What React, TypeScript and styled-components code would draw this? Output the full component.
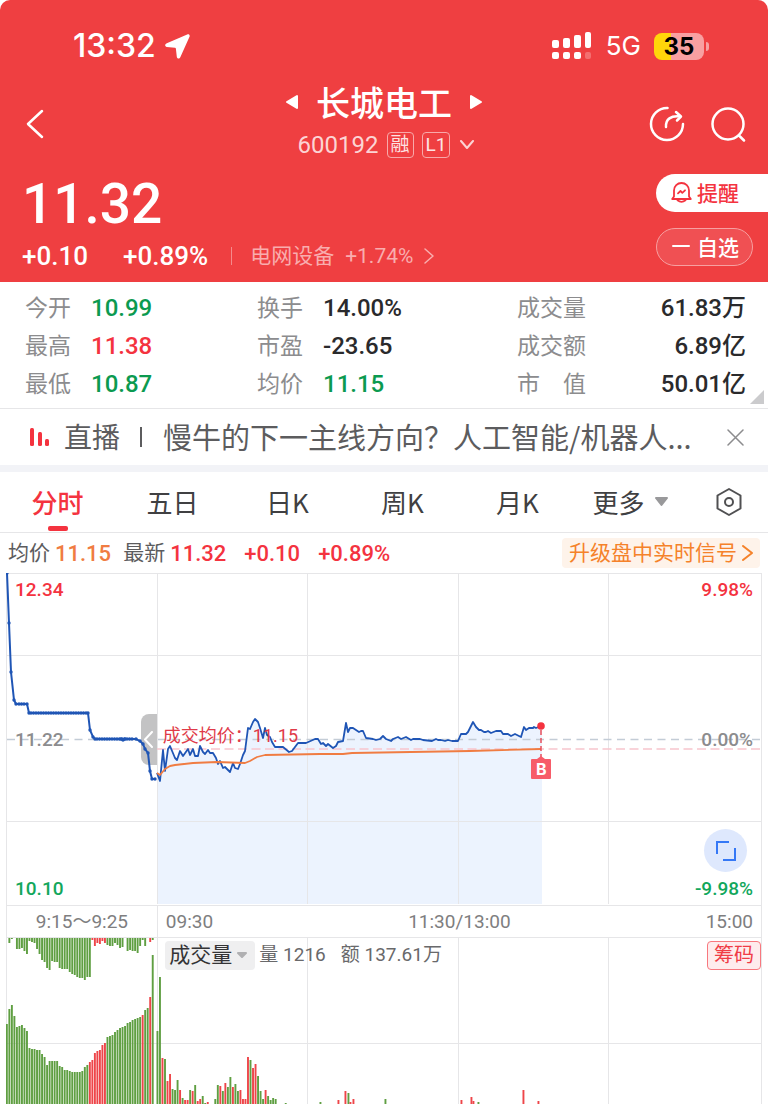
import React from "react";
import styled, { createGlobalStyle, css } from "styled-components";

const cjk = `"Noto Sans CJK SC", sans-serif`;
const numeric = `Roboto, ${cjk}`;

const color = {
  brand: "#ef3f41",
  up: "#f4333f",
  down: "#0b9a50",
  ink: "#2a2a2c",
  muted: "#8c8c8e",
  grid: "#e6e6e8",
  line: "#1f55b5",
  average: "#f07c42",
};

const GlobalStyle = createGlobalStyle`
  *, *::before, *::after { box-sizing: border-box; }
  body { margin: 0; background: #fff; font-family: ${cjk}; color: ${color.ink}; }
  button { border: 0; padding: 0; margin: 0; background: none; font: inherit; color: inherit; cursor: pointer; }
  a { color: inherit; text-decoration: none; }
  dl, dt, dd, h1, p { margin: 0; font-weight: inherit; }
  svg { display: block; flex: none; }
`;

const Page = styled.main`
  width: 100%;
  overflow: hidden;
`;

/* ---------- header ---------- */

const Header = styled.header`
  background: ${color.brand};
  color: #fff;
  border-radius: 10px 10px 0 0;
  padding-bottom: 10px;
`;

const StatusBar = styled.div`
  display: flex;
  align-items: center;
  justify-content: space-between;
  height: 80px;
  padding: 12px 59px 0 73px;
`;

const Clock = styled.div`
  display: flex;
  align-items: center;
  gap: 9px;
  font: 500 32px/32px Inter, sans-serif;
`;

const StatusIcons = styled.div`
  display: flex;
  align-items: center;
  font: 400 26px/32px Inter, sans-serif;
`;

const Network = styled.span`
  margin: 0 13px 0 14px;
`;

const Battery = styled.div`
  width: 50px;
  height: 27px;
  border-radius: 8px;
  background: linear-gradient(90deg, #ffd60a 35%, #f8a0a1 35%);
  color: #000;
  font: 700 24px/27px Inter, sans-serif;
  text-align: center;
`;

const BatteryCap = styled.div`
  width: 3px;
  height: 9px;
  margin-left: 2px;
  border-radius: 0 4px 4px 0;
  background: #f8a0a1;
`;

const Nav = styled.nav`
  display: grid;
  grid-template-columns: 1fr auto 1fr;
  align-items: center;
  height: 88px;
  padding: 0 21px;
`;

const BackButton = styled.button`
  justify-self: start;
  padding-left: 5px;
`;

const NavActions = styled.div`
  display: flex;
  justify-content: flex-end;
  gap: 26px;
`;

const StockTitle = styled.div`
  display: flex;
  flex-direction: column;
  align-items: center;
  gap: 6px;
  padding-bottom: 4px;
`;

const TitleLine = styled.div`
  display: flex;
  align-items: center;
  gap: 18px;
  h1 { font-size: 34px; line-height: 40px; font-weight: 500; }
`;

const CodeLine = styled.div`
  display: flex;
  align-items: center;
  gap: 8px;
  padding-left: 6px;
  font: 400 24px/34px ${numeric};
  color: #fcd4d4;
`;

const Tag = styled.span`
  height: 26px;
  min-width: 26px;
  padding: 0 3px;
  border: 1px solid #f8a9aa;
  border-radius: 4px;
  font: 400 19px/24px ${numeric};
  text-align: center;
  color: #fde3e3;
`;

const PriceBlock = styled.section`
  display: flex;
  justify-content: space-between;
`;

const PriceColumn = styled.div`
  padding: 6px 0 0 22px;
`;

const Price = styled.p`
  font: 500 55px/60px ${numeric};
`;

const ChangeLine = styled.div`
  display: flex;
  align-items: center;
  margin-top: 6px;
  font: 500 26px/32px ${numeric};
  span + span { margin-left: 35px; }
`;

const SectorLink = styled.a`
  display: flex;
  align-items: center;
  gap: 11px;
  margin-left: 23px;
  padding-left: 18px;
  font: 400 21px/18px ${numeric};
  color: #f9adae;
  border-left: 1px solid #f58a8b;
  b { font-weight: 400; }
`;

const Actions = styled.div`
  display: flex;
  flex-direction: column;
  gap: 16px;
  width: 112px;
  padding-top: 6px;
`;

const Pill = styled.button<{ $outlined?: boolean }>`
  display: flex;
  align-items: center;
  gap: 5px;
  height: 38px;
  padding: 0 0 2px 15px;
  font-size: 21px;
  font-weight: 500;
  line-height: 34px;
  background: #fff;
  color: ${color.up};
  border-radius: 19px 0 0 19px;
  ${(p) =>
    p.$outlined &&
    css`
      gap: 7px;
      margin-right: 15px;
      border: 1px solid #f7a0a1;
      border-radius: 19px;
      background: #f05053;
      color: #fff;
    `}
`;

/* ---------- quote figures ---------- */

const Figures = styled.dl`
  position: relative;
  display: grid;
  grid-template-columns: 232fr 260fr 229fr;
  padding: 6px 22px 6px 25px;
  border-bottom: 1px solid ${color.grid};
`;

const Figure = styled.div<{ $spread?: boolean }>`
  display: flex;
  align-items: center;
  gap: 20px;
  height: 38px;
  justify-content: ${(p) => (p.$spread ? "space-between" : "flex-start")};
  dt { padding-bottom: 2px; font-size: 23px; line-height: 36px; color: ${color.muted}; white-space: pre; }
`;

const FigureValue = styled.dd<{ $tone?: string }>`
  padding-top: 2px;
  font: 500 24px/36px ${numeric};
  color: ${(p) => p.$tone ?? color.ink};
`;

const Corner = styled.span`
  position: absolute;
  right: 4px;
  bottom: 4px;
  border-left: 14px solid transparent;
  border-bottom: 14px solid #cbcbcd;
`;

/* ---------- live news ---------- */

const LiveBar = styled.aside`
  display: flex;
  align-items: center;
  height: 63px;
  padding: 0 24px 0 30px;
  border-bottom: 7px solid #f2f3f7;
  color: ${color.muted};
`;

const LiveLink = styled.a`
  flex: 1;
  min-width: 0;
  display: flex;
  align-items: center;
  margin-right: 34px;
  font-size: 29px;
  line-height: 40px;
  color: #5c5c5e;
`;

const LiveLabel = styled.span`
  flex: none;
  margin-left: 14px;
  padding-bottom: 2px;
  font-size: 28px;
`;

const LiveDivider = styled.i`
  flex: none;
  width: 2px;
  height: 20px;
  margin: 0 21px 0 20px;
  background: #5c5c5e;
`;

const LiveText = styled.span`
  padding-bottom: 2px;
  white-space: nowrap;
`;

/* ---------- tabs ---------- */

const Tabs = styled.div`
  display: flex;
  height: 61px;
  border-bottom: 1px solid ${color.grid};
`;

const Tab = styled.button<{ $active?: boolean; $grow?: number }>`
  position: relative;
  flex: ${(p) => p.$grow ?? 115} 1 0;
  display: flex;
  align-items: center;
  justify-content: center;
  gap: 10px;
  font-size: 26px;
  line-height: 40px;
  color: ${(p) => (p.$active ? color.up : "#404042")};
  font-weight: ${(p) => (p.$active ? 500 : 400)};
  ${(p) =>
    p.$active &&
    css`
      &::after {
        content: "";
        position: absolute;
        left: 50%;
        bottom: 1px;
        width: 20px;
        height: 5px;
        margin-left: -10px;
        border-radius: 2px;
        background: ${color.up};
      }
    `}
`;

const SettingsTab = styled(Tab)`
  svg { margin-left: 4px; }
`;

/* ---------- chart ---------- */

const Legend = styled.div`
  display: flex;
  align-items: center;
  height: 40px;
  padding: 0 8px;
  font: 400 21px/32px ${numeric};
  color: #5c5c5e;
`;

const LegendValue = styled.b<{ $tone: string; $gap?: number }>`
  margin: 0 ${(p) => p.$gap ?? 18}px 0 0;
  padding-top: 2px;
  font-weight: 500;
  font-size: 22px;
  line-height: 30px;
  color: ${(p) => p.$tone};
`;

const LegendName = styled.span`
  margin-right: 5px;
`;

const Upgrade = styled.button`
  display: flex;
  align-items: center;
  gap: 5px;
  height: 30px;
  margin-left: auto;
  padding: 0 7px;
  border-radius: 4px;
  background: #fef3ea;
  color: #f5822a;
  font-size: 21px;
  line-height: 30px;
`;

const Panel = styled.section`
  margin: 0 6px;
  border: 1px solid ${color.grid};
  border-bottom: 0;
`;

const Plot = styled.div<{ $height: number }>`
  position: relative;
  height: ${(p) => p.$height}px;
`;

const Drawing = styled.svg`
  position: absolute;
  left: -1px;
  top: -1px;
  width: calc(100% + 2px);
  height: calc(100% + 1px);
  pointer-events: none;
`;

const AxisLabel = styled.span<{ $tone: string; $y: number; $right?: boolean }>`
  position: absolute;
  top: ${(p) => p.$y}px;
  ${(p) => (p.$right ? "right: 8px;" : "left: 8px;")}
  font: 500 19px/24px ${numeric};
  color: ${(p) => p.$tone};
`;

const AverageNote = styled.span`
  position: absolute;
  left: 20%;
  top: 147px;
  padding-left: 5px;
  font: 400 18px/30px ${numeric};
  color: #e03a48;
`;

const Handle = styled.button`
  position: absolute;
  right: 80%;
  top: 140px;
  display: flex;
  align-items: center;
  justify-content: center;
  width: 16px;
  height: 51px;
  margin-right: 1px;
  border-radius: 8px 0 0 8px;
  background: #c3c3c4;
  color: #fff;
`;

const BuyMark = styled.span`
  position: absolute;
  left: 71%;
  top: 185px;
  width: 20px;
  height: 20px;
  margin-left: -11px;
  border-radius: 1px;
  background: #f75c69;
  color: #fff;
  font: 700 16px/20px Inter, sans-serif;
  text-align: center;
  &::before {
    content: "";
    position: absolute;
    left: 6px;
    top: -3px;
    border: 4px solid transparent;
    border-top: 0;
    border-bottom: 3px solid #f75c69;
  }
`;

const Expand = styled.button`
  position: absolute;
  right: 14px;
  top: 255px;
  display: flex;
  align-items: center;
  justify-content: center;
  width: 43px;
  height: 43px;
  border-radius: 50%;
  background: #dee8fd;
`;

const TimeAxis = styled.div`
  display: flex;
  height: 33px;
  border: 1px solid ${color.grid};
  border-width: 1px 0;
  font: 400 19px/32px ${numeric};
  color: #7e7e80;
`;

const AuctionSpan = styled.span`
  flex: 0 0 20%;
  border-right: 1px solid ${color.grid};
  text-align: center;
`;

const SessionSpan = styled.div`
  flex: 1;
  display: grid;
  grid-template-columns: 1fr auto 1fr;
  padding: 0 8px;
  span:last-child { text-align: right; }
`;

const VolumeHead = styled.div`
  position: relative;
  display: flex;
  align-items: center;
  height: 34px;
  padding-left: 21%;
  font: 400 19px/28px ${numeric};
  color: #69696b;
  span { margin-right: 15px; }
`;

const Picker = styled.button`
  display: flex;
  align-items: center;
  gap: 5px;
  height: 29px;
  margin-right: 4px;
  padding: 0 8px 0 4px;
  border-radius: 4px;
  background: #efeff0;
  font-size: 21px;
  line-height: 28px;
  color: #343436;
`;

const Chips = styled.button`
  height: 29px;
  margin-left: auto;
  padding: 0 6px;
  border: 1px solid #f8787e;
  border-radius: 4px;
  background: #feeced;
  font-size: 20px;
  line-height: 26px;
  color: #f03c46;
`;

/* ---------- data ---------- */

const auctionPrice =
  "1,0 3,50 5,99 8,127 10,131 21,131 23,140 82,140 84,157 87,164 89,166 115,166 117,167 119,166 130,166 134,168 137,171 139,176 142,180 144,198 146,206 149,206";

const sessionPrice =
  "151,200 154,208 157,177 159,198 162,176 164,173 169,185 171,187 174,178 177,183 182,176 184,182 187,176 189,183 192,183 194,173 197,179 199,181 202,177 204,180 207,180 210,185 212,191 214,188 217,195 219,194 224,199 227,190 229,195 232,196 234,191 237,182 239,178 242,155 244,156 247,149 249,146 252,149 254,155 257,165 259,155 261,162 264,164 266,169 269,174 277,174 283,179 286,178 289,174 292,170 300,170 309,166 312,166 315,171 317,170 320,173 322,171 327,175 330,173 332,169 337,168 340,150 342,159 344,155 347,155 353,159 355,158 357,158 360,165 367,166 370,167 374,166 377,163 380,166 385,168 387,166 392,164 395,166 400,164 405,167 407,166 414,166 417,167 426,168 430,166 432,167 435,167 439,168 442,167 446,168 452,168 455,161 460,161 462,159 467,149 470,154 473,157 475,157 478,159 480,159 482,158 485,160 490,158 495,158 497,161 502,161 505,163 509,161 515,164 518,154 520,157 523,155 527,155 528,154 530,155 535,153";

const averagePrice =
  "151,200 154,202 159,196 164,193 169,192 187,190 211,189 239,190 244,188 251,184 259,182 314,181 337,181 346,180 464,178 535,176";

const auctionDots = [
  ...auctionPrice.split(" ").map((p) => p.split(",").map(Number)),
  ...Array.from({ length: 23 }, (_, i) => [25 + i * 2.5, 140]),
  ...Array.from({ length: 15 }, (_, i) => [91 + i * 2.5, 166]),
  [13, 131], [15.5, 131], [18, 131],
];

// Positive heights are falling (green) bars, negative ones rising (red).
const matched = [
  80, 95, 99, 88, 77, 78, 79, 76, 73, 56, 55, 55, 54, 54, 50, 47, 39, 43, 43, 43, 43, 38, 37, 34, 34, 33, 32, 32, 32,
  32, 33, 37, 39, -42, -44, -51, -53, -54, -59, -61, 67, 68, 69, 72, 74, 76, 77, 78, 81, 82, 84, 85, 86, 87, -89, 94,
  96, -107, 149,
];

const unmatched = [
  0, 5, 1, 0, 11, 11, 10, 13, 16, 3, 4, 5, 11, 16, 22, 24, 30, 32, 23, 24, 24, 30, 31, 31, 31, 34, 36, 37, 39, 40, 40,
  42, 39, 39, -2, -8, -5, -6, -3, -5, 7, 8, 8, 5, 7, 10, 9, 0, 13, 12, 13, 13, 15, 8, 2, 8, 0, -4, 2,
];

const traded = [
  73, 127, -46, 45, -23, -30, 15, 14, 24, -14, 6, -4, -4, 14, -13, 19, -3, -5, 8, 1, -2, 0, 0, 5, 19, -18, 13, -21, 17,
  27, -17, 20, 13, -14, -5, -5, -47, 44, -36, -40, 28, 13, 5, -14, 8, 4, 6, 5, 0, 0, 0, 1,
];

const lateTrades = [
  [314, 2], [332, -4], [339, -13], [342, 11], [344, -2], [347, -5], [379, 5], [455, -4], [465, -7], [467, -3], [472, 2], [517, -14], [532, -3],
];

const tone = (v: number) => (v < 0 ? "#ee4549" : "#5f9f42");

type Row = { label: string; value: string; tone?: string };

const figures: Row[] = [
  { label: "今开", value: "10.99", tone: color.down },
  { label: "换手", value: "14.00%" },
  { label: "成交量", value: "61.83万" },
  { label: "最高", value: "11.38", tone: color.up },
  { label: "市盈", value: "-23.65" },
  { label: "成交额", value: "6.89亿" },
  { label: "最低", value: "10.87", tone: color.down },
  { label: "均价", value: "11.15", tone: color.down },
  { label: "市\u3000值", value: "50.01亿" },
];

/* ---------- drawings ---------- */

const Stroke: React.FC<{ w: number; h: number; d: string; width?: number }> = ({ w, h, d, width = 2 }) => (
  <svg width={w} height={h} viewBox={`0 0 ${w} ${h}`} fill="none" stroke="currentColor" strokeWidth={width} strokeLinecap="round" strokeLinejoin="round" aria-hidden>
    <path d={d} />
  </svg>
);

const Triangle: React.FC<{ w: number; h: number; points: string; fill?: string }> = ({ w, h, points, fill = "#fff" }) => (
  <svg width={w} height={h} viewBox={`0 0 ${w} ${h}`} aria-hidden>
    <polygon points={points} fill={fill} stroke={fill} strokeWidth="2" strokeLinejoin="round" />
  </svg>
);

const Signal = () => (
  <svg width="40" height="28" viewBox="0 0 40 28" fill="#fff" aria-hidden>
    <rect x="0" y="8" width="7" height="8" rx="2" />
    <rect x="11" y="6" width="7" height="10" rx="2" />
    <rect x="22" y="3" width="7" height="13" rx="2" />
    <rect x="33" y="0" width="6" height="16" rx="2" />
    <rect x="0" y="20" width="7" height="7" rx="2" />
    <rect x="11" y="20" width="7" height="7" rx="2" />
    <rect x="22" y="20" width="7" height="7" rx="2" />
    <rect x="33" y="20" width="6" height="7" rx="2" opacity=".25" />
  </svg>
);

const Bell = () => (
  <svg width="21" height="21" viewBox="0 0 21 21" fill="none" stroke="currentColor" strokeWidth="1.8" strokeLinejoin="round" strokeLinecap="round" aria-hidden>
    <path d="M3 14.500V8.500a7.500 7.500 0 0 1 15 0v6l1.800 2.500H1.200z" />
    <path d="M6.500 18.300q4 3 8 0" />
    <path d="M7 11.300l2.500-2.300 1.800 1.800 2.700-2.500" />
  </svg>
);

const PriceChart = () => (
  <Drawing viewBox="0 0 756 332" preserveAspectRatio="none" fill="none" aria-label="分时走势">
    <polygon points={`151,331 ${sessionPrice} 536,154 536,331`} fill="#ecf3fe" />
    <path d="M1 82.500H755M1 248.500H755M151.500 1V331M301.500 1V331M452.500 1V331M602.500 1V331" stroke={color.grid} />
    <path d="M1 166.500H133M152 166.500H755" stroke="#c3ccd6" strokeWidth="1.300" strokeDasharray="8 5.500" />
    <path d="M151 176H755" stroke="#f8c5cd" strokeWidth="1.500" strokeDasharray="9 4.500" />
    <polyline points={auctionPrice} stroke={color.line} strokeWidth="2" />
    {auctionDots.map(([x, y], i) => (
      <circle key={i} cx={x} cy={y} r="1.700" fill={color.line} />
    ))}
    <polyline points={sessionPrice} stroke={color.line} strokeWidth="1.800" strokeLinejoin="round" />
    <polyline points={averagePrice} stroke={color.average} strokeWidth="1.800" strokeLinejoin="round" />
    <path d="M535 157V184" stroke="#e8505c" strokeWidth="1.500" strokeDasharray="5 3" />
    <circle cx="535" cy="153" r="3.800" fill={color.up} />
  </Drawing>
);

const VolumeChart = () => (
  <Drawing viewBox="0 0 756 167" preserveAspectRatio="none" aria-label="成交量">
    <path d="M1 106.500H755M151.500 1V167M301.500 1V167M452.500 1V167M602.500 1V167" stroke={color.grid} />
    {unmatched.map((v, i) => (
      <rect key={`u${i}`} x={i * 2.515 - 0.1} y="1" width="1.900" height={Math.abs(v)} fill={tone(v)} />
    ))}
    {matched.map((v, i) => (
      <rect key={`m${i}`} x={i * 2.515 - 0.1} y={167 - Math.abs(v)} width="1.900" height={Math.abs(v)} fill={tone(v)} />
    ))}
    {traded.map((v, i) => (
      <rect key={`t${i}`} x={150.5 + i * 2.515} y={167 - Math.abs(v)} width="1.900" height={Math.abs(v)} fill={tone(v)} />
    ))}
    {lateTrades.map(([x, v]) => (
      <rect key={x} x={x - 0.5} y={167 - Math.abs(v)} width="1.900" height={Math.abs(v)} fill={tone(v)} />
    ))}
  </Drawing>
);

/* ---------- page ---------- */

export default function App() {
  return (
    <Page>
      <GlobalStyle />
      <Header>
        <StatusBar>
          <Clock>
            13:32
            <svg width="25" height="25" viewBox="0 0 25 25" fill="#fff" aria-hidden>
              <path d="M22.200 .5 1.800 9.200C-.6 10.300 -.2 12.700 1.800 13L10 13.800C10.500 13.800 10.800 14.200 10.900 14.700L11.800 22.800C12 25 14.500 25.200 15.300 23.300L24.500 2.800C25.200 1 23.800 -.3 22.200 .5z" />
            </svg>
          </Clock>
          <StatusIcons>
            <Signal />
            <Network>5G</Network>
            <Battery>35</Battery>
            <BatteryCap />
          </StatusIcons>
        </StatusBar>

        <Nav>
          <BackButton aria-label="返回">
            <Stroke w={18} h={30} d="M16 2 2 15 16 28" width={2.5} />
          </BackButton>
          <StockTitle>
            <TitleLine>
              <button aria-label="上一只"><Triangle w={12} h={16} points="11,2 11,14 1,8" /></button>
              <h1>长城电工</h1>
              <button aria-label="下一只"><Triangle w={12} h={16} points="1,2 1,14 11,8" /></button>
            </TitleLine>
            <CodeLine>
              600192
              <Tag>融</Tag>
              <Tag>L1</Tag>
              <button aria-label="展开"><Stroke w={18} h={10} d="M3 1 9 8 15 1" /></button>
            </CodeLine>
          </StockTitle>
          <NavActions>
            <button aria-label="分享">
              <Stroke w={36} h={36} d="M18.500 2A16 16 0 1 0 34 18M17 21C16.500 13 22 9.500 31 10.500M27 6 32 10.500 28 14.500" width={2.5} />
            </button>
            <button aria-label="搜索">
              <Stroke w={36} h={36} d="M17 2.500A15.500 15.500 0 1 0 17 33.500 15.500 15.500 0 1 0 17 2.500M28 29.500 33 34.500" width={2.5} />
            </button>
          </NavActions>
        </Nav>

        <PriceBlock>
          <PriceColumn>
            <Price>11.32</Price>
            <ChangeLine>
              <span>+0.10</span>
              <span>+0.89%</span>
              <SectorLink href="#sector">
                电网设备 <b>+1.74%</b>
                <Stroke w={10} h={16} d="M1 1 9 8 1 15" width={1.5} />
              </SectorLink>
            </ChangeLine>
          </PriceColumn>
          <Actions>
            <Pill><Bell />提醒</Pill>
            <Pill $outlined><Stroke w={18} h={2} d="M1 1H17" />自选</Pill>
          </Actions>
        </PriceBlock>
      </Header>

      <Figures>
        {figures.map((f, i) => (
          <Figure key={f.label} $spread={i % 3 === 2}>
            <dt>{f.label}</dt>
            <FigureValue $tone={f.tone}>{f.value}</FigureValue>
          </Figure>
        ))}
        <Corner />
      </Figures>

      <LiveBar>
        <LiveLink href="#live">
          <svg width="20" height="18" viewBox="0 0 20 18" fill={color.up} aria-hidden>
            <rect x="0" y="0" width="4" height="18" rx="1.500" />
            <rect x="8" y="4" width="4" height="14" rx="1.500" />
            <rect x="15" y="11" width="4" height="7" rx="1.500" />
          </svg>
          <LiveLabel>直播</LiveLabel>
          <LiveDivider />
          <LiveText>慢牛的下一主线方向？人工智能/机器人...</LiveText>
        </LiveLink>
        <button aria-label="关闭"><Stroke w={17} h={17} d="M1 1 16 16M16 1 1 16" width={1.5} /></button>
      </LiveBar>

      <Tabs role="tablist">
        <Tab role="tab" $active>分时</Tab>
        <Tab role="tab">五日</Tab>
        <Tab role="tab">日K</Tab>
        <Tab role="tab">周K</Tab>
        <Tab role="tab">月K</Tab>
        <Tab role="tab" $grow={110}>
          更多
          <Triangle w={13} h={10} points="1,1 12,1 6.5,8" fill="#99999b" />
        </Tab>
        <SettingsTab $grow={83} aria-label="设置">
          <svg width="28" height="30" viewBox="0 0 28 30" fill="none" stroke="#505052" strokeWidth="2" strokeLinejoin="round" aria-hidden>
            <path d="M14 2 25.500 8.500V21.500L14 28 2.500 21.500V8.500z" />
            <circle cx="14" cy="15" r="4" />
          </svg>
        </SettingsTab>
      </Tabs>

      <Legend>
        <LegendName>均价</LegendName>
        <LegendValue $tone={color.average} $gap={12}>11.15</LegendValue>
        <LegendName>最新</LegendName>
        <LegendValue $tone={color.up}>11.32</LegendValue>
        <LegendValue $tone={color.up}>+0.10</LegendValue>
        <LegendValue $tone={color.up}>+0.89%</LegendValue>
        <Upgrade>
          升级盘中实时信号
          <Stroke w={11} h={16} d="M1 1 10 8 1 15" />
        </Upgrade>
      </Legend>

      <Panel>
        <Plot $height={331}>
          <Handle aria-label="收起竞价"><Stroke w={9} h={17} d="M8 1 1 8.500 8 16" /></Handle>
          <PriceChart />
          <AxisLabel $y={4} $tone={color.up}>12.34</AxisLabel>
          <AxisLabel $y={154} $tone={color.muted}>11.22</AxisLabel>
          <AxisLabel $y={303} $tone="#12a75c">10.10</AxisLabel>
          <AxisLabel $right $y={4} $tone={color.up}>9.98%</AxisLabel>
          <AxisLabel $right $y={154} $tone={color.muted}>0.00%</AxisLabel>
          <AxisLabel $right $y={303} $tone="#12a75c">-9.98%</AxisLabel>
          <AverageNote>成交均价：11.15</AverageNote>
          <BuyMark>B</BuyMark>
          <Expand aria-label="全屏">
            <svg width="20" height="20" viewBox="0 0 20 20" fill="none" stroke="#3578f6" strokeWidth="2" aria-hidden>
              <path d="M1 13V1H13M19 7V19H7" />
            </svg>
          </Expand>
        </Plot>
        <TimeAxis>
          <AuctionSpan>9:15～9:25</AuctionSpan>
          <SessionSpan>
            <span>09:30</span>
            <span>11:30/13:00</span>
            <span>15:00</span>
          </SessionSpan>
        </TimeAxis>
        <Plot $height={166}>
          <VolumeChart />
          <VolumeHead>
            <Picker>
              成交量
              <Triangle w={10} h={6} points="1,1 9,1 5,5" fill="#b0b0b2" />
            </Picker>
            <span>量 1216</span>
            <span>额 137.61万</span>
            <Chips>筹码</Chips>
          </VolumeHead>
        </Plot>
      </Panel>
    </Page>
  );
}
